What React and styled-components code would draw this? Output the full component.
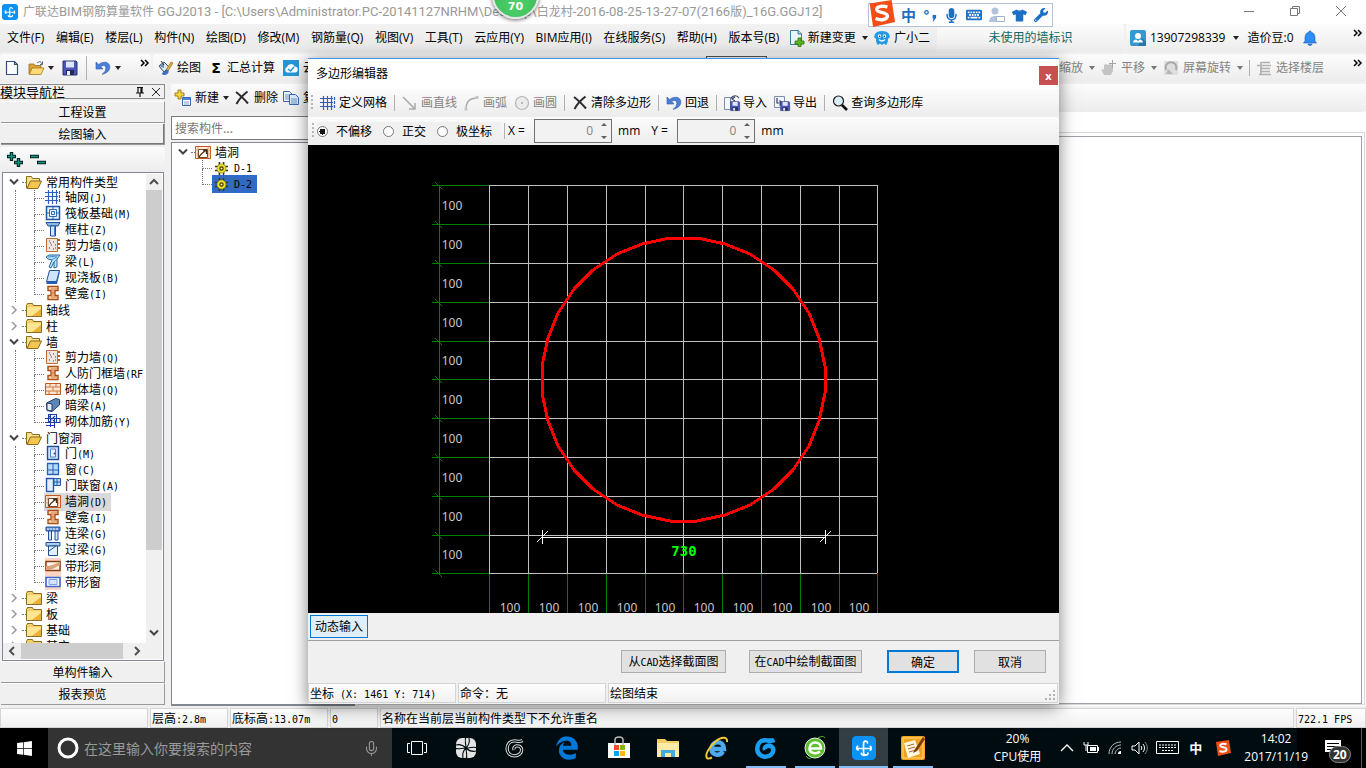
import { useState } from "react"
import styled, { createGlobalStyle, css } from "styled-components"
import { FaWindows, FaEdgeLegacy, FaMicrophone, FaTshirt, FaWrench, FaKeyboard } from "react-icons/fa"
import { Mic } from "lucide-react"

const ui = `"Open Sans", "Noto Sans CJK SC", sans-serif`
const sun = `"Noto Sans CJK SC", sans-serif`

const GlobalStyle = createGlobalStyle`
    * { box-sizing: border-box; }
    body { margin: 0; background: #f0f0f0; overflow: hidden; }
    button, input, select { font: inherit; color: inherit; }
    button { padding: 0; margin: 0; border: 0; background: none; white-space: nowrap; }
    ul { list-style: none; margin: 0; padding: 0; }
`

const Svg = styled.svg`
    display: block;
    flex: none;
    width: ${p => p.$w || 16}px;
    height: ${p => p.$h || p.$w || 16}px;
    overflow: visible;
`

// ---------- icons ----------
const floppy = <>
    <path d="M1 1h13l1 1v13H1z" fill="#4a55b5" stroke="#2b3278" />
    <path d="M4 1.5h8v6H4z" fill="#dfe6fb" />
    <path d="M4 10h8v5H4z" fill="#23295f" /><path d="M5 11h3v4H5z" fill="#e8ecff" />
</>
const undo = <path d="M1 2v7h7L5.800 6.600C8.500 4.500 11 5.500 10.800 8.500c-.2 2.500-1.500 4.300-3.800 5.800 4.800-1 7.800-3.500 7.800-7.300C14.800 2 8.500.5 3.700 4.500z" fill="#4a7fd6" stroke="#2c58ad" strokeWidth=".6" />
const axis = <path d="M3.5 1v14M7.5 1v14M11.5 1v14M0 3.5h13M0 7.5h13M0 11.5h13M14.5 2v3M14.5 6v3M14.5 10v3" stroke="#2f5fb8" fill="none" strokeWidth="1.2" />
const brick = <>
    <path d="M.5 2.5h15v11H.5z" fill="#fbe6d2" stroke="#c2581c" />
    <path d="M1 6h14M1 10h14M5 3v3M11 3v3M8 6v4M4 10v3M12 10v3" stroke="#d07a3e" />
</>
const niche = <>
    <path d="M3 1.500h10v4h-3v5h3v4H3v-4h3v-5H3z" fill="#fbd9b5" stroke="#a84e12" strokeWidth="1.4" />
    <path d="M6 4h6M6 12h6M8 5v6M6 8h4" stroke="#d07a3e" />
</>
const wallHole = <>
    <path d="M.5 2.5h15v12H.5z" fill="#fdeadb" stroke="#c2581c" />
    <path d="M.5 6h15M.5 10h15M3 3v11M13 3v11" stroke="#eaa377" />
    <path d="M3.5 5.5h9v8h-9z" fill="#fff" stroke="#7a4a2a" />
    <path d="M4 13c2-4 4-4 7-7M8 6h3.5v4" fill="none" stroke="#4a2c14" strokeWidth="1.3" />
</>
const icons = {
    app: <>
        <rect width="16" height="16" rx="3" fill="#0c92f5" />
        <path d="M3.8 6.8c-1 .8-1 2 .2 2.600M3.600 8.300h8.500M12.200 6.900c.8.8.8 1.800 0 2.600M10.300 4.600C10 3 7.700 3 7.700 5v6.200c0 2 2.800 2 2.900.2M6.200 11.500c.4 1.600 2 1.600 3 1" stroke="#fff" fill="none" strokeWidth="1.1" strokeLinecap="round" />
    </>,
    newFile: <path d="M2.5 1.5h8l3 3v10h-11zM10.5 1.5v3h3" fill="#fafcff" stroke="#35507c" strokeWidth="1.2" />,
    open: <>
        <path d="M1 4h5l1 1.5h6V9H4l-2 5H1z" fill="#d9a33a" stroke="#96702a" strokeWidth=".8" />
        <path d="M4 8h12l-3 6.5H1.5z" fill="#ffdb7a" stroke="#a6781c" strokeWidth=".8" />
        <path d="M9 3c2-2 4-1.5 5 1M14.5 1.5V4.5H12" stroke="#4d6585" fill="none" />
    </>,
    floppy,
    undo,
    paint: <>
        <path d="M2 6l5-4 5 5-5 5z" fill="#dbe9f5" stroke="#33475f" /><path d="M2 6l5-4v6z" fill="#6f8ea8" />
        <path d="M4 1l3 4" stroke="#333" /><path d="M14 2l2 1-5 8-2-1z" fill="#e6b13c" stroke="#7d5812" strokeWidth=".6" />
        <path d="M5 13c3-1 4-4 6-3 2 2-1 5-3 5s-3 0-3-2z" fill="#3b72c8" />
    </>,
    cloud: <>
        <rect width="16" height="16" fill="#2496d8" />
        <path d="M4 12.5a3 3 0 010-5.5 4 4 0 017.5-.5 3 3 0 01.5 6z" fill="#fff" />
        <path d="M5 9l2.5 2 3.5-4" stroke="#2496d8" fill="none" strokeWidth="1.5" />
    </>,
    create: <>
        <path d="M3 0h3v3h3v3H6v3H3V6H0V3h3z" fill="#f7d438" stroke="#8a6c10" strokeWidth=".8" />
        <path d="M7.5 7.5h8v8h-8z" fill="#fff" stroke="#3767b0" /><path d="M8 8h7v2H8z" fill="#4c86d8" />
        <path d="M9 12h5M9 14h5" stroke="#7a9ccc" />
    </>,
    cross: <path d="M2 2c4 3 8 7 12 11.5M13.5 1.5C9 5 5 9 2.5 14" stroke="#2c2c2c" fill="none" strokeWidth="2" />,
    copy: <>
        <path d="M.5 1.5h6l3 3v7h-9z" fill="#eef4ff" stroke="#3767b0" /><path d="M2 5h4M2 7h4M2 9h4" stroke="#6b92cc" />
        <path d="M6.5 4.5h6l3 3v7h-9z" fill="#dce9fc" stroke="#3767b0" /><path d="M8 9h6M8 11h6M8 13h6" stroke="#6b92cc" />
    </>,
    newDoc: <>
        <path d="M2.5.5h8l3 3v11h-11z" fill="#eaf5fb" stroke="#3b7d9c" /><path d="M10 0v4h4" fill="#9fd0e6" stroke="#3b7d9c" />
        <path d="M10 8h3v3h3v3h-3v2.5h-3V14H7v-3h3z" fill="#5cb821" stroke="#2d7208" strokeWidth=".8" />
    </>,
    guy: <>
        <path d="M1 4c2-4 12-4 14 0l1 3-2 2c0 3-1 5-2 6l-2-1.5-2 1.5-2-1.5L4 15C2 13 2 11 2 9L0 7z" fill="#1f9be6" />
        <circle cx="5.5" cy="6" r="1.8" fill="#fff" /><circle cx="10.5" cy="6" r="1.8" fill="#fff" />
        <circle cx="5.7" cy="6.2" r=".8" fill="#123" /><circle cx="10.3" cy="6.2" r=".8" fill="#123" />
        <path d="M5 9.5c2 2 4 2 6 0" stroke="#fff" fill="none" strokeWidth="1.2" />
    </>,
    user: <>
        <rect width="16" height="16" rx="2" fill="#3399cf" /><path d="M8 16l4-8 4 4v4z" fill="#2479ab" />
        <circle cx="8" cy="6" r="3" fill="#fff" /><path d="M3 12.5c0-2 2-3 3-3l2 1.5 2-1.5c1 0 3 1 3 3z" fill="#fff" />
    </>,
    bell: <path d="M8 1c1 0 1.3.6 1.3 1.3C12 3 13 5 13 8v3l1.5 2h-13L3 11V8c0-3 1-5 3.7-5.7C6.700 1.600 7 1 8 1zM6 14h4c0 2-4 2-4 0z" fill="#2a8cf4" stroke="#1c5fae" strokeWidth=".6" />,
    hand: <>
        <path d="M3 15l-2-4c-1-2 1-3 2-1V5l2-1 2 1 2-1 2 1 1 2v4l-2 4z" fill="#c4c4c4" />
        <path d="M11.5 0v8M8 3.5h7" stroke="#a4a4a4" />
    </>,
    rotate: <>
        <rect x="1" y="1" width="14" height="14" fill="#dedede" />
        <path d="M3 10A5.5 5.5 0 1113 10" stroke="#a9a9a9" fill="none" strokeWidth="2" /><path d="M5 9l5 5H3z" fill="#b5b5b5" />
    </>,
    floors: <path d="M5 2.5h9M1 5.5h14M4 8.5h10M4 11.5h10M3 14.5h12M5 2v12" stroke="#b0b0b0" strokeWidth="1.5" fill="none" />,
    axis,
    line: <path d="M1 2l11 11M13 8v6H7" stroke="#a9a9a9" fill="none" strokeWidth="1.5" />,
    arc: <><path d="M2 14C2 7 6 3 13 3" stroke="#a9a9a9" fill="none" strokeWidth="1.3" /><path d="M.5 12.5h3v3h-3zM11.5 1h3v3h-3z" fill="#c5c5c5" /></>,
    circle: <><circle cx="8" cy="8" r="6.5" fill="#ececec" stroke="#b5b5b5" strokeWidth="1.2" /><circle cx="8" cy="8" r="1" fill="#aaa" /></>,
    importer: <>
        <path d="M.5 2.5h6v12h-6z" fill="#f6f8ff" stroke="#7d8db0" />
        <path d="M7 3c3-3 6-3 8 0M11 2l-3 2 3 2" stroke="#34405f" fill="none" strokeWidth="1.2" />
        <g transform="translate(6 6) scale(.64)">{floppy}</g>
    </>,
    exporter: <>
        <path d="M.5 1.5h10v11H.5z" fill="#f0f4fc" stroke="#7d8db0" />
        <path d="M3 3v5h4M5.5 5.5L8 8l-2.5 2.5" stroke="#34405f" fill="none" strokeWidth="1.2" />
        <g transform="translate(6 6) scale(.64)">{floppy}</g>
    </>,
    search: <><circle cx="6.5" cy="6" r="5" fill="#d9effa" stroke="#1d1d1d" strokeWidth="1.2" /><path d="M10 10l5 5" stroke="#111" strokeWidth="2.6" /></>,
    folder: <>
        <path d="M.5 3.5l1-2h5l1 2h8v11H.5z" fill="#f4cf63" stroke="#8d6c1c" />
        <path d="M1 5h14v4l-9 5H1z" fill="#fde48f" /><path d="M15 7v7H6z" fill="#e6b238" />
    </>,
    folderOpen: <>
        <path d="M.5 2.5h5l1 2h7v3h-9l-3 6.5h-1z" fill="#f7df92" stroke="#8d6c1c" />
        <path d="M4.5 7h11l-3.5 7.5H1z" fill="#f3c650" stroke="#8d6c1c" />
    </>,
    raft: <><path d="M1.5 1.5h13v13h-13z" stroke="#1f5a9c" fill="#e8f2fc" strokeWidth="1.5" /><path d="M4.5 4.5h7v7h-7zM8 2v3M8 11v3M2 8h3M11 8h3M6.5 6.5h3v3h-3z" stroke="#2b6ab5" fill="none" /></>,
    column: <><path d="M1 1.5h14L13 5H3z" fill="#8db7ea" stroke="#1f4f93" /><path d="M5.5 5h5v10h-5z" fill="#d6e7fb" stroke="#1f4f93" /><path d="M9 6h1v8H9z" fill="#3f7fd0" /></>,
    concrete: <>
        <path d="M1.5 1.5h11v13h-11z" fill="#eee5df" stroke="#c66a35" />
        <path d="M4 4h1M8 5h1M6 8h1M10 8h1M4 11h1M8 12h1M10 11h1M5 6h1" stroke="#444" /><path d="M13 3h2M13 7h2M13 11h2" stroke="#c2581c" strokeWidth="2" />
    </>,
    beam: <><path d="M1 4l3-2h11l-3 4v8l-3 1V9l-3 6-2-1 3-7-4-1z" fill="#bfe0f6" stroke="#1e6ba6" /><path d="M3 4l9-1M6 7l6-3M9 9l3-3" stroke="#3f8fd0" /></>,
    slab: <><path d="M4.5 1.5h10l-3 11h-10z" fill="#cfe3fb" stroke="#1f4f93" /><path d="M1.5 12.5h10l3-11v3L12 15H1.5z" fill="#2860b5" /></>,
    niche,
    brick,
    hidden: <><path d="M1.5 6l9-4.5 4 1V8L7 14.5l-5-1z" fill="#5d86b8" stroke="#233f66" /><path d="M2 6l5 1v7l-5-1z" fill="#e0ecf8" stroke="#233f66" /></>,
    rebar: <path d="M3.5 1.5h8v8h-8zM0 5.5h15v4H0M5.5 2v12M9.5 6v9M1 12.5h9M4 3l6 6M10 3L4 9" stroke="#1c3da8" fill="none" strokeWidth="1.1" />,
    door: <><path d="M2.5 1.5h11v13h-11z" fill="#cfe3fb" stroke="#1f4f93" strokeWidth="1.4" /><path d="M5.5 4h5v8h-5z" fill="#e9f3fe" stroke="#4f83c8" /><circle cx="9.5" cy="8.5" r="1" fill="#1f4f93" /></>,
    window: <><path d="M2.5 2.5h11v11h-11z" fill="#b9dbfa" stroke="#2463b8" strokeWidth="1.3" /><path d="M8 3v10M3 9h10" stroke="#2463b8" /></>,
    doorWindow: <><path d="M1.5 1.5h7v13h-7z" fill="#e4effc" stroke="#2557a8" strokeWidth="1.4" /><path d="M9 1.5h6.5v7H9zM12 2v6M9 5h6" fill="#b9dbfa" stroke="#2557a8" /></>,
    wallHole,
    linkBeam: <><path d="M1 2h14v4H1z" fill="#5c97de" stroke="#1f4f93" /><path d="M3.5 6h3v9h-3zM10 6h3v9h-3z" fill="#d6e7fb" stroke="#1f4f93" /><path d="M2 4h12" stroke="#fff" strokeDasharray="2 1" /></>,
    lintel: <><path d="M1 1.5h14V5H1z" fill="#a9cdf3" stroke="#1f4f93" /><path d="M3.5 5h9v9.5h-9z" fill="#e4effc" stroke="#1f4f93" /><path d="M4 10l7-5" stroke="#1f4f93" /></>,
    stripHole: <><path d="M0 0h16v16H0z" fill="#fbd6c4" /><path d="M1 3.5h14v9H1z" fill="#fdf3ea" stroke="#8b3f0c" strokeWidth="1.5" /><path d="M1 8c5 0 9-2 14-4v3C10 10 6 12 1 12z" fill="#d9a27a" /></>,
    stripWindow: <><path d="M0 0h16v16H0z" fill="#fbd6c4" /><path d="M1 3.5h14v9H1z" fill="#fff" stroke="#3c66d0" strokeWidth="1.6" /><path d="M4 5.5h8v5H4z" fill="#d5e3fb" stroke="#7da0e6" /></>,
    gear: <>
        <path d="M5.5 0v16M10.5 0v16M0 5.5h16M0 10.5h16" stroke="#3d3800" strokeWidth="2" />
        <circle cx="8" cy="8" r="5.5" fill="#ece02a" stroke="#6b6300" strokeWidth=".8" strokeDasharray="2 2" />
        <circle cx="8" cy="8" r="2" fill="#fff9a0" stroke="#3d3800" strokeWidth="1.5" />
    </>,
    plusPlus: <>
        <path d="M0 4.5h9M4.5 0v9M7 10.5h9M11.5 6v9" stroke="#03201e" strokeWidth="3.4" />
        <path d="M1 4.5h7M4.5 1v7M8 10.5h7M11.5 7v7" stroke="#0f9488" strokeWidth="1.4" />
    </>,
    minusMinus: <><path d="M0 4.5h9M7 10.5h9" stroke="#03201e" strokeWidth="3.4" /><path d="M1 4.5h7M8 10.5h7" stroke="#0f9488" strokeWidth="1.4" /></>,
    pin: <path d="M5 3.5h6M6 3.5v5M10 3.5v5M9 3.5v5M4 9h8M8 9v4" stroke="#111" fill="none" strokeWidth="1.2" />,
    thinX: <path d="M4 4l8 8M12 4l-8 8" stroke="#222" fill="none" />,
    down: <path d="M4 5.5l4 4 4-4" stroke="#444" fill="none" strokeWidth="2" />,
    right: <path d="M6 4l4 4-4 4" stroke="#999" fill="none" strokeWidth="1.5" />,
    up: <path d="M4 10l4-4 4 4" stroke="#505050" fill="none" strokeWidth="2" />,
    left: <path d="M10 4L6 8l4 4" stroke="#505050" fill="none" strokeWidth="2" />,
    next: <path d="M6 4l4 4-4 4" stroke="#505050" fill="none" strokeWidth="2" />,
    more: <path d="M4 3l3 3-3 3M8 3l3 3-3 3" stroke="#000" fill="none" strokeWidth="1.5" />,
    sogou: <><path d="M1 2l13-2 2 13-13 3z" fill="#f04e16" /><path d="M11.5 4.2C8 3 5 4 5.2 5.7c.2 2 6.3 1.300 6.300 3.800 0 2.200-4 2.800-7 1.500" stroke="#fff" fill="none" strokeWidth="2" /></>,
}

const Icon = ({ name, size }) => <Svg viewBox="0 0 16 16" $w={size} aria-hidden="true">{icons[name]}</Svg>

const Arrow = styled.span`
    flex: none;
    width: 0;
    height: 0;
    border: 3px solid transparent;
    border-top: 4px solid ${p => p.$dim ? "#777" : "#222"};
    border-bottom: 0;
`

// half-width latin next to full-width hanzi
const Half = styled.span`
    font-family: "DejaVu Sans Mono", monospace;
    font-size: 10px;
    white-space: pre;
`
const Wide = styled.span`
    font-family: Roboto, sans-serif;
    font-size: 13px;
`
const mix = (text, Latin) => text.split(/([\x20-\x7e]+)/).map((s, i) =>
    i % 2 ? <Latin key={i}>{s}</Latin> : s)
const Sun = ({ children }) => mix(children, Half)

// ---------- shell ----------
const Desktop = styled.div`
    position: relative;
    display: flex;
    flex-direction: column;
    height: 100vh;
    background: #f0f0f0;
    font: 12px/16px ${ui};
    color: #000;
    white-space: nowrap;
`
const TitleBar = styled.header`
    display: flex;
    align-items: center;
    gap: 5px;
    height: 24px;
    padding: 0 15px 0 2px;
    background: #fff;
    color: #999;
`
const TitleText = styled.span`flex: 1;`
const CaptionButtons = styled.div`
    display: flex;
    gap: 36px;
    padding: 0 5px 3px 0;
`
const band = css`
    background: linear-gradient(#fcfcfc, #ececec);
    border-radius: 3px;
`
const MenuRow = styled.div`
    display: flex;
    height: 30px;
    padding-bottom: 2px;
    background: #f0f0f0;
`
const MenuBar = styled.nav`
    display: flex;
    align-items: center;
    justify-content: space-between;
    width: 937px;
    padding: 0 7px;
    background: linear-gradient(#f2f2f2, #e9e9e9);
`
const MenuTail = styled.div`
    display: flex;
    align-items: center;
    gap: 6px;
    margin-left: -3px;
`
const MenuNote = styled.div`
    ${band}
    display: flex;
    align-items: center;
    justify-content: center;
    width: 187px;
    color: #0b6a66;
`
const UserBand = styled.div`
    ${band}
    display: flex;
    align-items: center;
    flex: 1;
    gap: 8px;
    margin-left: 2px;
    padding-left: 4px;
`
const UserName = styled.span`margin-left: -4px;`
const Spacer = styled.span`flex: 1;`
const ToolRow = styled.div`
    display: flex;
    gap: 2px;
    height: 30px;
    padding-bottom: 2px;
`
const ToolBand = styled.div`
    ${band}
    display: flex;
    align-items: center;
    gap: ${p => p.$gap || 8}px;
    flex: ${p => p.$grow ? 1 : "none"};
    width: ${p => p.$w ? p.$w + "px" : "auto"};
    height: 28px;
    padding-left: 4px;
    overflow: hidden;
`
const ToolGroup = styled.div`
    display: flex;
    align-items: center;
    gap: 6px;
`
const Tool = styled.button`
    display: inline-flex;
    align-items: center;
    gap: ${p => p.$gap || 4}px;
    color: ${p => p.disabled ? "#838383" : "#000"};
`
const Sigma = styled.b`
    width: 14px;
    font: bold 14px/16px "DejaVu Sans", sans-serif;
`
const Sep = styled.span`
    flex: none;
    width: 1px;
    height: ${p => p.$h || 16}px;
    background: #b0b0b0;
`
const HiddenCombo = styled.div`
    align-self: flex-start;
    width: 61px;
    height: 24px;
    margin: 2px auto 0 359px;
    border: 1px solid #555;
    background: #fff;
`
const More = styled.span`
    margin-left: ${p => p.$ml || 0}px;
    padding-bottom: 6px;
`

// ---------- workspace ----------
const Workspace = styled.main`
    display: flex;
    flex: 1;
    min-height: 0;
`
const NavPanel = styled.aside`
    display: flex;
    flex-direction: column;
    width: 165px;
    padding-bottom: 1px;
    font-family: ${sun};
`
const NavHead = styled.div`
    display: flex;
    align-items: center;
    height: 15px;
    margin-bottom: 2px;
    border: 1px solid #8c8c8c;
    border-left: 0;
    font-size: 13px;
    line-height: 13px;
`
const NavButton = styled.button`
    flex: none;
    height: 22px;
    margin-left: 1px;
    border: 1px solid #9a9a9a;
    border-width: 1px 1px 1px 0;
    border-top-color: #fff;
    background: #f0f0f0;
    line-height: 18px;
    ${p => p.$active && css`box-shadow: inset -1px -1px #777;`}
`
const TreeTools = styled.div`
    ${band}
    display: flex;
    align-items: center;
    gap: 7px;
    height: 25px;
    margin-top: 2px;
    padding-left: 7px;
`
const TreeBox = styled.div`
    display: grid;
    grid-template: 1fr 16px / 1fr 16px;
    flex: 1;
    min-height: 0;
    margin: 0 1px 0 2px;
    border: 1px solid #828790;
    padding: 1px 1px 1px 0;
    background: #fff;
`
const Tree = styled.ul`
    min-width: 0;
    overflow: hidden;
`
const ScrollV = styled.div`
    display: flex;
    flex-direction: column;
    justify-content: space-between;
    padding-bottom: 2px;
    background: linear-gradient(#cdcdcd, #cdcdcd) 0 16px / 100% 360px no-repeat #f0f0f0;
`
const ScrollH = styled.div`
    display: flex;
    justify-content: space-between;
    grid-column: 1 / -1;
    padding: 0 17px 0 1px;
    background: linear-gradient(#cdcdcd, #cdcdcd) 18px 0 / 102px 100% no-repeat #f0f0f0;
`
const Row = styled.div`
    display: flex;
    align-items: center;
    height: 16px;
    line-height: 16px;
`
const Twist = styled.span`
    display: flex;
    align-items: center;
    width: 23px;
    padding-left: 3px;
    &::after { content: ""; width: 4px; border-top: 1px dotted #777; }
`
const Label = styled.span`padding: 0 4px;`
const Kids = styled.ul`
    margin-left: 12px;
    padding-left: 18px;
    border-left: 1px dotted #777;
`
const Branch = styled.span`
    flex: none;
    width: 10px;
    height: 16px;
    &::before, &::after { content: ""; display: block; height: 8px; border-left: 1px dotted #777; }
    &::before { border-bottom: 1px dotted #777; }
    ${p => p.$last && css`&::after { border-left-color: transparent; }`}
`
const Leaf = styled.span`
    display: flex;
    padding-left: 1px;
    background: ${p => p.$on ? "#d9d9d9" : "none"};
`

const tree = [
    ["常用构件类型", [["axis", "轴网(J)"], ["raft", "筏板基础(M)"], ["column", "框柱(Z)"], ["concrete", "剪力墙(Q)"], ["beam", "梁(L)"], ["slab", "现浇板(B)"], ["niche", "壁龛(I)"]]],
    ["轴线"],
    ["柱"],
    ["墙", [["concrete", "剪力墙(Q)"], ["niche", "人防门框墙(RF"], ["brick", "砌体墙(Q)"], ["hidden", "暗梁(A)"], ["rebar", "砌体加筋(Y)"]]],
    ["门窗洞", [["door", "门(M)"], ["window", "窗(C)"], ["doorWindow", "门联窗(A)"], ["wallHole", "墙洞(D)", true], ["niche", "壁龛(I)"], ["linkBeam", "连梁(G)"], ["lintel", "过梁(G)"], ["stripHole", "带形洞"], ["stripWindow", "带形窗"]]],
    ["梁"], ["板"], ["基础"], ["其它"],
]

const PartPanel = styled.section`
    display: flex;
    flex-direction: column;
    width: 184px;
    margin-left: 6px;
`
const PartSearch = styled.input`
    height: 24px;
    margin: 4px 0 2px;
    border: 1px solid #7a7a7a;
    padding: 0 3px 2px;
    background: #fff;
    font: 12px ${sun};
    &::placeholder { color: #777; opacity: 1; }
`
const PartTree = styled.div`
    flex: 1;
    border: 1px solid #828790;
    border-width: 1px 0 2px 1px;
    padding-top: 1px;
    background: #fff;
    font-family: ${sun};
`
const PartKids = styled.ul`padding-left: 30px;`
const PartLeaf = styled.span`
    display: flex;
    align-items: center;
    padding-left: 3px;
    background: ${p => p.$on ? "#316ac5" : "none"};
`
const PartLabel = styled.span`padding: 0 5px 0 6px;`
const ViewPanel = styled.section`
    display: flex;
    flex: 1;
    flex-direction: column;
    margin-left: 3px;
    background: #fff;
`
const ViewHead = styled.div`
    ${band}
    height: 28px;
`
const ViewCanvas = styled.div`
    flex: 1;
    margin: 20px 1px 1px 0;
    border: 1px solid #d8d8d8;
    padding: 3px 2px 2px 0;
    &::before { content: ""; display: block; height: 100%; border: 1px solid #a0a0a8; }
`
const StatusBar = styled.footer`
    display: flex;
    gap: 2px;
    height: 22px;
    padding-top: 2px;
    background: #f0f0f0;
    font-family: ${sun};
`
const Cell = styled.div`
    width: ${p => p.$w ? p.$w + "px" : "auto"};
    flex: ${p => p.$w ? "none" : 1};
    border: 1px solid #d4d4d4;
    padding-left: 1px;
    background: linear-gradient(#fefefe, #f0f0f0);
    line-height: 18px;
`

// ---------- polygon dialog ----------
const Dialog = styled.section`
    position: absolute;
    left: 308px;
    top: 58px;
    width: 751px;
    border-top: 1px solid #3a96e8;
    background: #f0f0f0;
    box-shadow: 0 3px 16px rgba(0, 0, 0, .5);
`
const DialogTitle = styled.div`
    display: flex;
    align-items: center;
    justify-content: space-between;
    height: 30px;
    padding: 0 1px 0 8px;
    background: #fff;
`
const CloseButton = styled.button`
    align-self: flex-end;
    width: 19px;
    height: 19px;
    margin-bottom: 4px;
    background: #c75050;
    color: #fff;
    font: bold 11px/16px "Open Sans", sans-serif;
`
const DialogBar = styled.div`
    ${band}
    display: flex;
    align-items: center;
    gap: ${p => p.$gap || 7}px;
    height: 28px;
    padding-left: ${p => p.$gap ? 4 : 3}px;
`
const Grip = styled.span`
    width: 2px;
    height: 16px;
    background: repeating-linear-gradient(#b5b5b5 0 2px, transparent 2px 4px);
`
const Radios = styled.div`
    display: flex;
    align-items: center;
    gap: 11px;
    height: 18px;
    padding-right: 9px;
    background: #f0f0f0;
    label { display: flex; align-items: center; gap: 8px; font-family: ${sun}; }
    input {
        appearance: none;
        width: 11px;
        height: 11px;
        margin: 0;
        border: 1px solid #777;
        border-radius: 50%;
        background: #fff;
    }
    input:checked { background: radial-gradient(circle, #111 0 3px, #fff 3px); }
`
const Coord = styled.label`
    display: flex;
    align-items: center;
    gap: 6px;
    margin-right: 8px;
`
const AxisName = styled.span`width: 20px;`
const Spin = styled.span`
    display: flex;
    align-items: center;
    width: 78px;
    height: 24px;
    border: 1px solid #707070;
    padding-right: 4px;
    background: #f2f2f2;
    input {
        flex: 1;
        min-width: 0;
        border: 0;
        padding: 0 8px 0 0;
        background: none;
        color: #838383;
        text-align: right;
    }
`
const CanvasSvg = styled.svg`
    display: block;
    width: 100%;
    height: 468px;
    background: #000;
    text { font: 12px "Noto Sans", sans-serif; fill: #c8c8c8; text-anchor: middle; }
`
const DimText = styled.text`
    && { font: bold 14px "DejaVu Sans Mono", monospace; fill: #00ff00; }
`
const Strip = styled.div`
    height: 28px;
    padding: 2px;
    border-bottom: 1px solid #a0a0a0;
`
const ToggleButton = styled.button`
    width: 58px;
    height: 23px;
    border: 1px solid #0078d7;
    background: #e0eefa;
`
const DialogButtons = styled.div`
    display: flex;
    justify-content: flex-end;
    height: 41px;
    padding: 9px 13px 0 0;
    font-family: ${sun};
`
const PushButton = styled.button`
    width: ${p => p.$w}px;
    height: 23px;
    margin-left: ${p => p.$gap || 0}px;
    border: ${p => p.$primary ? "2px solid #0078d7" : "1px solid #adadad"};
    background: #e1e1e1;
    line-height: 18px;
`
const DialogStatus = styled.div`
    display: flex;
    gap: 2px;
    height: 22px;
    padding: 1px 1px 1px 0;
    font-family: ${sun};
`
const SizeGrip = styled(Svg)`
    align-self: flex-end;
    margin-left: auto;
`
const LastCell = styled(Cell)`display: flex;`

const xs = [0, 39, 78, 117, 156, 194, 233, 272, 311, 350, 388]
const ring = Array.from({ length: 32 }, (_, i) => {
    const a = (i + 0.5) * Math.PI / 16
    return [375.5 + 142 * Math.cos(a), 234.5 + 142 * Math.sin(a)].map(Math.round).join()
}).join(" ")

const PolygonCanvas = () => (
    <CanvasSvg aria-label="730" shapeRendering="crispEdges">
        {xs.map(d => (
            <g key={d}>
                <path d={`M124 ${40.5 + d}h57M${181.5 + d} 428v40`} stroke="#008000" />
                <path d={`M127 ${37 + d}l7 7`} stroke="#008000" />
                <path d={`M181 ${40.5 + d}h388M${181.5 + d} 40v388`} stroke="#c0c0c0" />
            </g>
        ))}
        <path d="M131.5 40v388" stroke="#008000" />
        {xs.slice(1).map(d => (
            <g key={d}>
                <text x="144" y={26 + d}>100</text>
                <text x={163 + d} y="467">100</text>
            </g>
        ))}
        <polygon points={ring} fill="none" stroke="#f00" strokeWidth="3" />
        <path d="M234 392.5h284M234.5 385v14M517.5 385v14M229 397l11-11M512 397l11-11" stroke="#fff" />
        <DimText x="376" y="411">730</DimText>
    </CanvasSvg>
)

const DialogTool = ({ icon, children, ...rest }) => <Tool $gap={3} {...rest}><Icon name={icon} />{children}</Tool>

const PolygonDialog = () => {
    const [mode, setMode] = useState("不偏移")
    return (
        <Dialog role="dialog" aria-label="多边形编辑器">
            <DialogTitle>多边形编辑器<CloseButton aria-label="关闭">x</CloseButton></DialogTitle>
            <DialogBar>
                <Grip />
                <DialogTool icon="axis">定义网格</DialogTool>
                <Sep />
                <DialogTool icon="line" disabled>画直线</DialogTool>
                <DialogTool icon="arc" disabled>画弧</DialogTool>
                <DialogTool icon="circle" disabled>画圆</DialogTool>
                <Sep />
                <DialogTool icon="cross">清除多边形</DialogTool>
                <Sep />
                <DialogTool icon="undo">回退</DialogTool>
                <Sep />
                <DialogTool icon="importer">导入</DialogTool>
                <DialogTool icon="exporter">导出</DialogTool>
                <Sep />
                <DialogTool icon="search">查询多边形库</DialogTool>
            </DialogBar>
            <DialogBar $gap={3}>
                <Grip />
                <Radios>
                    {["不偏移", "正交", "极坐标"].map(m => (
                        <label key={m}>
                            <input type="radio" name="offset" checked={mode === m} onChange={() => setMode(m)} />{m}
                        </label>
                    ))}
                </Radios>
                <Sep />
                {["X", "Y"].map(c => (
                    <Coord key={c}>
                        <AxisName>{c} =</AxisName>
                        <Spin>
                            <input defaultValue="0" disabled />
                            <Svg viewBox="0 0 6 16" $w={6} $h={16}><path d="M0 3l3-3 3 3zM0 13l3 3 3-3z" fill="#606060" /></Svg>
                        </Spin>
                        mm
                    </Coord>
                ))}
            </DialogBar>
            <PolygonCanvas />
            <Strip><ToggleButton>动态输入</ToggleButton></Strip>
            <DialogButtons>
                <PushButton $w={105}><Sun>从CAD选择截面图</Sun></PushButton>
                <PushButton $w={113} $gap={23}><Sun>在CAD中绘制截面图</Sun></PushButton>
                <PushButton $w={72} $gap={25} $primary>确定</PushButton>
                <PushButton $w={72} $gap={15}>取消</PushButton>
            </DialogButtons>
            <DialogStatus>
                <Cell $w={148}><Sun>坐标 (X: 1461 Y: 714)</Sun></Cell>
                <Cell $w={148}>命令：无</Cell>
                <LastCell>
                    绘图结束
                    <SizeGrip viewBox="0 0 12 12" $w={12}>
                        <path d="M8 0h2v2H8zM4 4h2v2H4zM8 4h2v2H8zM0 8h2v2H0zM4 8h2v2H4zM8 8h2v2H8z" fill="#b5b5b5" />
                    </SizeGrip>
                </LastCell>
            </DialogStatus>
        </Dialog>
    )
}

// ---------- floating overlays ----------
const Ball = styled.div`
    position: absolute;
    left: 492px;
    top: -28px;
    width: 47px;
    height: 47px;
    border: 2px solid #e6e6e6;
    border-radius: 50%;
    padding-top: 25px;
    background: radial-gradient(circle at 50% 70%, #4ed06a, #35b552);
    box-shadow: 0 1px 4px rgba(0, 0, 0, .6);
    color: #fff;
    font: bold 11px/16px "DejaVu Sans", sans-serif;
    text-align: center;
`
const ImeBar = styled.div`
    position: absolute;
    left: 868px;
    top: 3px;
    display: flex;
    align-items: center;
    gap: 7px;
    width: 185px;
    height: 24px;
    border: 1px solid #b3c3dc;
    background: #fff;
    color: #1b6fc4;
    font: bold 15px/20px ${sun};
`
const ImeLogo = styled.span`margin: -3px -1px 0 -1px;`

// ---------- taskbar ----------
const Taskbar = styled.footer`
    display: flex;
    align-items: center;
    height: 40px;
    background: linear-gradient(90deg, #000c10 0 1297px, #000 1297px);
    color: #fff;
`
const Start = styled.button`
    display: flex;
    align-items: center;
    justify-content: center;
    width: 48px;
    height: 40px;
    background: #000;
    font-size: 17px;
`
const TaskSearch = styled.label`
    display: flex;
    align-items: center;
    gap: 5px;
    width: 344px;
    height: 40px;
    padding: 0 12px 0 9px;
    background: #333;
    color: #999;
    input {
        flex: 1;
        border: 0;
        padding: 0;
        background: none;
        font: 14px ${sun};
    }
    input::placeholder { color: #999; opacity: 1; }
`
const TaskApp = styled.button`
    display: flex;
    align-items: center;
    justify-content: center;
    width: ${p => p.$wide ? 55 : 49}px;
    height: 40px;
    background: ${p => p.$run ? `linear-gradient(#85bdf5, #85bdf5) bottom / ${p.$on ? 49 : 40}px 2px no-repeat` : "none"};
    background-color: ${p => p.$on ? "#333e42" : "transparent"};
    color: ${p => p.$color || "#fff"};
    font-size: 24px;
`
const Tray = styled.div`
    display: flex;
    align-items: center;
    gap: 9px;
    flex: 1;
    justify-content: flex-end;
    font-size: 12px;
    line-height: 18px;
    text-align: center;
`
const Lines = styled.div`margin: 0 ${p => p.$mr || 0}px 0 ${p => p.$ml || 0}px;`
const TrayIme = styled.span`
    padding: 0 4px 0 1px;
    font: bold 13px/18px ${sun};
`
const Notice = styled.div`
    display: flex;
    align-items: center;
    width: 38px;
    height: 40px;
    margin: 0 4px 0 7px;
    border-right: 1px solid #555;
`
const Badge = styled.span`
    margin: 12px 0 0 -13px;
    border: 1px solid #888;
    border-radius: 9px;
    padding: 0 3px;
    background: #333;
    font: bold 12px/15px "Open Sans", sans-serif;
`

const swirl = "M21 3c-3 2-7 .5-10 .5C5.5 3.5 2.5 8 2.5 13c0 5 4 8.5 9 8.5s8.5-3.5 8.5-7.5c0-3-3-5-6-4.5-2.5.5-4 2.5-3 4.5"

const App = () => (
    <>
        <GlobalStyle />
        <Desktop>
            <TitleBar>
                <Icon name="app" />
                <TitleText>{mix("广联达BIM钢筋算量软件 GGJ2013 - [C:\\Users\\Administrator.PC-20141127NRHM\\Desktop\\白龙村-2016-08-25-13-27-07(2166版)_16G.GGJ12]", Wide)}</TitleText>
                <CaptionButtons>
                    <Svg viewBox="0 0 10 10" $w={10}><path d="M0 5.5h10" stroke="#777" /></Svg>
                    <Svg viewBox="0 0 10 10" $w={10}><path d="M.5 2.5h7v7h-7zM2.5 2V.5h7v7H8" stroke="#777" fill="none" /></Svg>
                    <Svg viewBox="0 0 10 10" $w={10}><path d="M0 0l10 10M10 0L0 10" stroke="#777" /></Svg>
                </CaptionButtons>
            </TitleBar>
            <MenuRow>
                <MenuBar>
                    {["文件(F)", "编辑(E)", "楼层(L)", "构件(N)", "绘图(D)", "修改(M)", "钢筋量(Q)", "视图(V)", "工具(T)", "云应用(Y)", "BIM应用(I)", "在线服务(S)", "帮助(H)", "版本号(B)"].map(m =>
                        <Tool key={m}>{m}</Tool>)}
                    <MenuTail>
                        <Tool><Icon name="newDoc" />新建变更</Tool>
                        <Arrow />
                        <Tool><Icon name="guy" />广小二</Tool>
                    </MenuTail>
                </MenuBar>
                <MenuNote>未使用的墙标识</MenuNote>
                <UserBand>
                    <Icon name="user" />
                    <UserName>13907298339</UserName>
                    <Arrow />
                    <span>造价豆:0</span>
                    <Icon name="bell" />
                    <Spacer />
                    <More><Icon name="more" /></More>
                </UserBand>
            </MenuRow>
            <ToolRow>
                <ToolBand $w={151}>
                    <Tool aria-label="新建"><Icon name="newFile" /></Tool>
                    <Tool aria-label="打开"><Icon name="open" /><Arrow /></Tool>
                    <Tool aria-label="保存"><Icon name="floppy" /></Tool>
                    <Sep $h={24} />
                    <Tool aria-label="撤销"><Icon name="undo" /><Arrow /></Tool>
                    <Spacer />
                    <More><Icon name="more" /></More>
                </ToolBand>
                <ToolBand $grow>
                    <Tool><Icon name="paint" />绘图</Tool>
                    <Tool><Sigma>Σ</Sigma>汇总计算</Tool>
                    <Tool><Icon name="cloud" />云检查</Tool>
                    <HiddenCombo />
                    <ToolGroup>
                        <Tool disabled>缩放</Tool>
                        <Arrow $dim />
                        <Tool disabled><Icon name="hand" />平移</Tool>
                        <Arrow $dim />
                        <Tool disabled><Icon name="rotate" />屏幕旋转</Tool>
                        <Arrow $dim />
                        <Sep />
                        <Tool disabled><Icon name="floors" />选择楼层</Tool>
                    </ToolGroup>
                    <More $ml={18}><Icon name="more" /></More>
                </ToolBand>
            </ToolRow>
            <Workspace>
                <NavPanel>
                    <NavHead>模块导航栏<Spacer /><Icon name="pin" /><Icon name="thinX" /></NavHead>
                    <NavButton>工程设置</NavButton>
                    <NavButton $active>绘图输入</NavButton>
                    <TreeTools><Icon name="plusPlus" /><Icon name="minusMinus" /></TreeTools>
                    <TreeBox>
                        <Tree>
                            {tree.map(([name, kids]) => (
                                <li key={name}>
                                    <Row>
                                        <Twist><Icon name={kids ? "down" : "right"} /></Twist>
                                        <Icon name={kids ? "folderOpen" : "folder"} />
                                        <Label>{name}</Label>
                                    </Row>
                                    {kids && (
                                        <Kids>
                                            {kids.map(([icon, text, on], i) => (
                                                <li key={text}>
                                                    <Row>
                                                        <Branch $last={i === kids.length - 1} />
                                                        <Leaf $on={on}><Icon name={icon} /><Label><Sun>{text}</Sun></Label></Leaf>
                                                    </Row>
                                                </li>
                                            ))}
                                        </Kids>
                                    )}
                                </li>
                            ))}
                        </Tree>
                        <ScrollV><Icon name="up" /><Icon name="down" /></ScrollV>
                        <ScrollH><Icon name="left" /><Icon name="next" /></ScrollH>
                    </TreeBox>
                    <NavButton>单构件输入</NavButton>
                    <NavButton>报表预览</NavButton>
                </NavPanel>
                <PartPanel>
                    <ToolBand $gap={5}>
                        <Tool><Icon name="create" />新建<Arrow /></Tool>
                        <Tool><Icon name="cross" />删除</Tool>
                        <Tool><Icon name="copy" />复制</Tool>
                    </ToolBand>
                    <PartSearch placeholder="搜索构件..." aria-label="搜索构件" />
                    <PartTree>
                        <Row><Twist><Icon name="down" /></Twist><Icon name="wallHole" /><Label>墙洞</Label></Row>
                        <PartKids>
                            {["D-1", "D-2"].map((d, i) => (
                                <li key={d}>
                                    <Row>
                                        <Branch $last={i === 1} />
                                        <PartLeaf $on={i === 1}><Icon name="gear" size={13} /><PartLabel><Sun>{d}</Sun></PartLabel></PartLeaf>
                                    </Row>
                                </li>
                            ))}
                        </PartKids>
                    </PartTree>
                </PartPanel>
                <ViewPanel><ViewHead /><ViewCanvas /></ViewPanel>
            </Workspace>
            <StatusBar>
                <Cell $w={148} />
                <Cell $w={78}><Sun>层高:2.8m</Sun></Cell>
                <Cell $w={98}><Sun>底标高:13.07m</Sun></Cell>
                <Cell $w={48}><Sun>0</Sun></Cell>
                <Cell>名称在当前层当前构件类型下不允许重名</Cell>
                <Cell $w={70}><Sun>722.1 FPS</Sun></Cell>
            </StatusBar>
            <Taskbar>
                <Start aria-label="开始"><FaWindows /></Start>
                <TaskSearch>
                    <Svg viewBox="0 0 22 22" $w={22}><circle cx="11" cy="11" r="9" fill="none" stroke="#fff" strokeWidth="3" /></Svg>
                    <input placeholder="在这里输入你要搜索的内容" />
                    <Mic size={17} strokeWidth={1.5} />
                </TaskSearch>
                <TaskApp aria-label="任务视图">
                    <Svg viewBox="0 0 20 16" $w={20} $h={16}><path d="M4.5 1.5h11v13h-11zM3 3.5H.5v9H3M17 3.5h2.5v9H17" fill="none" stroke="#fff" /></Svg>
                </TaskApp>
                <TaskApp aria-label="风车">
                    <Svg viewBox="0 0 22 22" $w={22}>
                        <rect x="1" y="1" width="20" height="20" rx="6" fill="#e4e4e4" />
                        <path d="M11 11C11 6 9 3 11 0M11 11c5 0 8-2 11 0M11 11c0 5 2 8 0 11M11 11c-5 0-8 2-11 0M11 11C8 8 5 7 1 8M11 11c3-3 4-6 3-10M11 11c3 3 6 4 10 3M11 11c-3 3-4 6-3 10" stroke="#000c10" fill="none" strokeWidth="1.1" />
                    </Svg>
                </TaskApp>
                <TaskApp aria-label="广联达">
                    <Svg viewBox="0 0 24 24" $w={20}>
                        <path d={swirl} fill="none" stroke="#d8d8d8" strokeWidth="4" /><path d={swirl} fill="none" stroke="#000c10" strokeWidth="1.6" />
                    </Svg>
                </TaskApp>
                <TaskApp $wide $color="#0078d7" aria-label="Edge"><FaEdgeLegacy /></TaskApp>
                <TaskApp aria-label="应用商店">
                    <Svg viewBox="0 0 24 24" $w={24}>
                        <path d="M1 7h22v15H1z" fill="#fff" /><path d="M8 9V4c0-4 8-4 8 0v5" fill="none" stroke="#bbb" strokeWidth="1.5" />
                        <path d="M7 9h5v5H7z" fill="#f25022" /><path d="M13 9h5v5h-5z" fill="#7fba00" /><path d="M7 15h5v5H7z" fill="#00a4ef" /><path d="M13 15h5v5h-5z" fill="#ffb900" />
                    </Svg>
                </TaskApp>
                <TaskApp aria-label="文件资源管理器">
                    <Svg viewBox="0 0 22 20" $w={22} $h={20}>
                        <path d="M0 1h8l2 2h12v16H0z" fill="#f5ce62" /><path d="M0 5h22v14H0z" fill="#ffe9a6" /><path d="M4 19v-7h14v7h-4v-4H8v4z" fill="#3fa9e0" />
                    </Svg>
                </TaskApp>
                <TaskApp $color="#4fa9ea" aria-label="Internet Explorer">
                    <Svg viewBox="0 0 24 24" $w={24}>
                        <path d="M6.5 13h12.500c0-9-12.500-9-12.500 0 0 6.500 8.500 7.500 11.500 2.500" fill="none" stroke="currentColor" strokeWidth="4.4" />
                        <path d="M22 6c1-5-5-6-11-1C4 11-.5 19 2 22c1 1 3 .5 5-.5" fill="none" stroke="#f3c92e" strokeWidth="2" />
                    </Svg>
                </TaskApp>
                <TaskApp $run aria-label="广联达云">
                    <Svg viewBox="0 0 24 24" $w={22}><path d={swirl} fill="none" stroke="#1c9df0" strokeWidth="5" /></Svg>
                </TaskApp>
                <TaskApp $run aria-label="浏览器">
                    <Svg viewBox="0 0 24 24" $w={24}>
                        <circle cx="12" cy="12" r="10" fill="#5bbf2f" stroke="#e9f7e0" /><path d="M6.5 12.5h11.5c0-8-11.5-8-11.5 0 0 5 7 6 10.5 3" fill="none" stroke="#fff" strokeWidth="2.5" />
                        <path d="M15 2c3-2 6-2 7 0M3 20c1 2 3 3 5 2" stroke="#5bbf2f" fill="none" />
                    </Svg>
                </TaskApp>
                <TaskApp $run $on aria-label="GGJ2013"><Icon name="app" size={24} /></TaskApp>
                <TaskApp $run aria-label="记事">
                    <Svg viewBox="0 0 24 24" $w={24}>
                        <rect width="24" height="24" rx="2" fill="#f3a11c" /><path d="M2 2h20v20H2z" fill="none" stroke="#ffd980" />
                        <path d="M3 7l11-3 5 14-12 4z" fill="#fff7e2" />
                        <path d="M6 10l7-2M7 13l7-2M8 16l7-2" stroke="#a66a1b" /><path d="M22 1l-8 12-2 4 4-2 8-12z" fill="#7b3c0c" />
                    </Svg>
                </TaskApp>
                <Tray>
                    <Lines $mr={10}>20%<br />CPU使用</Lines>
                    <Svg viewBox="0 0 14 14" $w={14}><path d="M1 10l6-6 6 6" stroke="#fff" fill="none" strokeWidth="1.3" /></Svg>
                    <Svg viewBox="0 0 16 14" $w={16} $h={14}><path d="M4.5 4.5h10v7h-10z" fill="none" stroke="#fff" /><path d="M7 6h6v4H7zM15 6h1v4h-1z" fill="#fff" /><path d="M1 1v3h4V1M3 4v6" stroke="#fff" fill="none" /></Svg>
                    <Svg viewBox="0 0 14 14" $w={14}><path d="M1 13C1 6 6 1 13 1M4 13c0-5 4-9 9-9M7 13c0-3 3-6 6-6" stroke="#bbb" fill="none" /><path d="M10 13c0-2 1-3 3-3v3z" fill="#fff" /></Svg>
                    <Svg viewBox="0 0 16 14" $w={16} $h={14}><path d="M1 5h3l4-4v12L4 9H1zM10 5c1 1 1 3 0 4M12 3c2 2 2 6 0 8" stroke="#fff" fill="none" /><path d="M14 1c3 3 3 9 0 12" stroke="#888" fill="none" /></Svg>
                    <Svg viewBox="0 0 23 14" $w={23} $h={14}><path d="M.5.5h22v12H.5z" fill="none" stroke="#fff" /><path d="M3 4h17M3 6.5h17M6 9.5h11" stroke="#fff" strokeDasharray="2 1" /></Svg>
                    <TrayIme>中</TrayIme>
                    <Icon name="sogou" />
                    <Lines $ml={4}>14:02<br />2017/11/19</Lines>
                    <Notice>
                        <Svg viewBox="0 0 18 18" $w={18}><path d="M1 1h16v12h-6l-3 4v-4H1z" fill="#fff" /><path d="M3 4.5h12M3 7.5h12M3 10.5h8" stroke="#000" /></Svg>
                        <Badge>20</Badge>
                    </Notice>
                </Tray>
            </Taskbar>
            <PolygonDialog />
            <Ball>70</Ball>
            <ImeBar>
                <ImeLogo><Icon name="sogou" size={27} /></ImeLogo>
                <span>中</span>
                <Svg viewBox="0 0 16 16" $w={14}><circle cx="4" cy="5" r="2" fill="none" stroke="#1b6fc4" strokeWidth="1.5" /><path d="M11 8h4v3l-3 4h-1l1-3h-1z" fill="#1b6fc4" /></Svg>
                <FaMicrophone size={15} />
                <FaKeyboard size={16} />
                <Svg viewBox="0 0 16 16" $w={16}><circle cx="6" cy="4" r="3.5" fill="#b3c3dc" /><path d="M0 15c0-8 12-8 12 0z" fill="#b3c3dc" /><path d="M7.5 9.5h8v5h-8z" fill="#fff" stroke="#9db0cf" /></Svg>
                <FaTshirt size={15} />
                <FaWrench size={14} />
            </ImeBar>
        </Desktop>
    </>
)

export default App
